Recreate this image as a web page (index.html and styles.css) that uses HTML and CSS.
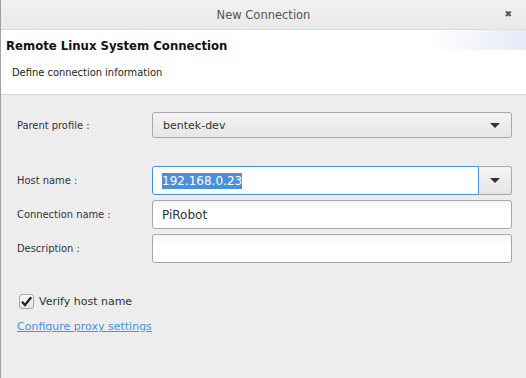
FILE: index.html
```html
<!DOCTYPE html>
<html>
    <head>
        <title>New Connection</title>
        <link rel="stylesheet" href="styles.css">
    </head>
    <body>
    <div class="dialog">
        <div class="titlebar">
            <span class="title">New Connection</span>
            <span class="close">&#x2716;</span>
        </div>
        <div class="banner">
            <h1>Remote Linux System Connection</h1>
            <p>Define connection information</p>
        </div>
        <div class="body">
            <div class="row">
                <label>Parent profile :</label>
                <div class="combo">
                    <span class="value">bentek-dev</span>
                    <span class="arrow"></span>
                </div>
            </div>
            <div class="row row_host">
                <label>Host name :</label>
                <div class="editcombo">
                    <div class="entry focused"><span class="selected">192.168.0.23</span></div>
                    <div class="dropbtn"><span class="arrow"></span></div>
                </div>
            </div>
            <div class="row">
                <label>Connection name :</label>
                <div class="entry">PiRobot</div>
            </div>
            <div class="row">
                <label>Description :</label>
                <div class="entry"></div>
            </div>
            <div class="check">
                <span class="box">
                    <svg width="13" height="13" viewBox="0 0 13 13"><path d="M2 6.8 L5 10 L11.2 2.2" fill="none" stroke="#222" stroke-width="2.3"/></svg>
                </span>
                <span>Verify host name</span>
            </div>
            <a class="link" href="#">Configure proxy settings</a>
        </div>
    </div>
    </body>
</html>
```

FILE: styles.css
```css
body {
	margin: 0;
	font-family: "DejaVu Sans", sans-serif;
	background: #ededed;
}
.dialog {
	width: 526px;
	height: 378px;
	border-left: 1px solid #a0a0a0;
	box-sizing: border-box;
	overflow: hidden;
}
.titlebar {
	height: 29px;
	background: linear-gradient(#f2f2f2, #e9e9e9);
	border-bottom: 1px solid #dcdcdc;
	display: flex;
	align-items: center;
	justify-content: center;
	position: relative;
}
.title {
	font-size: 11.5px;
	color: #555;
}
.close {
	position: absolute;
	right: 14px;
	top: 9px;
	font-size: 9px;
	color: #4a5357;
}
.banner {
	background: linear-gradient(100deg, rgba(230, 237, 248, 0) 35%, #e4ebf7) no-repeat right top / 150px 20px, #fff;
	height: 65px;
	padding: 8px 0 0 5px;
	border-bottom: 1px solid #d6d6d6;
	box-sizing: border-box;
}
h1 {
	font-family: "DejaVu Sans Condensed", "DejaVu Sans", sans-serif;
	font-size: 13px;
	font-weight: bold;
	color: #111;
	margin: 0 0 13px 0;
}
.banner p {
	font-family: "DejaVu Sans Condensed", "DejaVu Sans", sans-serif;
	font-size: 11px;
	color: #222;
	margin: 0 0 0 6px;
}
.body {
	padding: 17px 14px 0 16px;
	font-size: 11px;
	color: #2e3436;
}
.row {
	display: flex;
	align-items: center;
	margin-bottom: 5px;
}
.row label {
	font-family: "DejaVu Sans Condensed", "DejaVu Sans", sans-serif;
	width: 135px;
}
.row_host {
	margin-top: 28px;
}
.combo {
	flex: 1;
	height: 24px;
	border: 1px solid #a8a8a8;
	border-radius: 3px;
	background: linear-gradient(#f4f4f4, #e6e6e6);
	display: flex;
	align-items: center;
	padding: 0 11px 0 10px;
	font-size: 11px;
}
.combo .value {
	flex: 1;
}
.arrow {
	width: 0;
	height: 0;
	border-left: 5px solid transparent;
	border-right: 5px solid transparent;
	border-top: 5px solid #2e3436;
}
.editcombo {
	flex: 1;
	display: flex;
	height: 29px;
}
.entry {
	flex: 1;
	height: 29px;
	box-sizing: border-box;
	border: 1px solid #a8a8a8;
	border-radius: 3px;
	background: linear-gradient(#f6f6f6, #fff 40%);
	display: flex;
	align-items: center;
	padding: 0 9px;
	font-size: 12px;
	color: #2e3436;
}
.entry.focused {
	border: 1px solid #4a90d9;
	border-radius: 3px 0 0 3px;
	background: #fff;
}
.selected {
	background: #4a90d9;
	color: #fff;
	padding: 1px 0;
}
.dropbtn {
	width: 33px;
	box-sizing: border-box;
	border: 1px solid #a8a8a8;
	border-left: none;
	border-radius: 0 3px 3px 0;
	background: linear-gradient(#f4f4f4, #e6e6e6);
	display: flex;
	align-items: center;
	justify-content: center;
}
.check {
	display: flex;
	align-items: center;
	margin-top: 31px;
	font-size: 11px;
}
.box {
	width: 13px;
	height: 13px;
	border: 1px solid #a8a8a8;
	border-radius: 3px;
	background: linear-gradient(#fafafa, #e4e4e4);
	margin: 0 5px 0 2px;
	display: flex;
}
.link {
	display: inline-block;
	margin-top: 11px;
	color: #4a90d9;
	font-size: 11px;
}
```
